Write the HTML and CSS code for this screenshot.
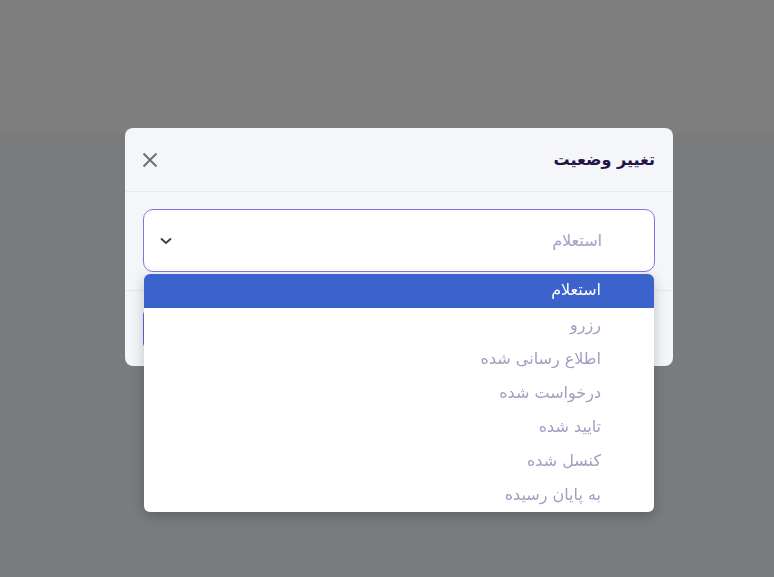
FILE: index.html
```html
<!DOCTYPE html>
<html lang="fa">
<head>
<meta charset="utf-8">
<link rel="stylesheet" href="styles.css">
</head>
<body>
<div class="page">
  <div class="topbar"></div>
  <div class="content"></div>
</div>
<div class="overlay">
  <div class="modal" dir="rtl">
    <div class="modal-header">
      <h2 class="title">تغییر وضعیت</h2>
      <button class="close" aria-label="close">
        <svg width="16" height="16" viewBox="0 0 16 16"><path d="M1.5 1.5 L14.5 14.5 M14.5 1.5 L1.5 14.5" stroke="#707070" stroke-width="2" fill="none"/></svg>
      </button>
    </div>
    <div class="modal-body">
      <div class="select">
        <span class="placeholder">استعلام</span>
        <svg class="chev" width="12" height="8" viewBox="0 0 12 8"><path d="M1 1.5 L6 6 L11 1.5" stroke="#3c3c44" stroke-width="1.8" fill="none"/></svg>
      </div>
      <ul class="menu">
        <li class="item active">استعلام</li>
        <li class="item">رزرو</li>
        <li class="item">اطلاع رسانی شده</li>
        <li class="item">درخواست شده</li>
        <li class="item">تایید شده</li>
        <li class="item">کنسل شده</li>
        <li class="item">به پایان رسیده</li>
      </ul>
    </div>
    <div class="modal-footer">
      <button class="btn">ثبت</button>
    </div>
  </div>
</div>
</body>
</html>
```
FILE: styles.css
```css
html, body {
  margin: 0;
  padding: 0;
  height: 100%;
}
body {
  font-family: "DejaVu Sans", "Noto Sans", sans-serif;
  background: #f4f6fa;
}
.page {
  height: 100%;
}
.topbar {
  height: 132px;
  background: #ffffff;
}
.overlay {
  position: fixed;
  inset: 0;
  background: rgba(0, 0, 0, 0.5);
}
.modal {
  position: relative;
  margin: 128px 0 0 125px;
  width: 548px;
  background: #f5f6fa;
  border-radius: 8px;
}
.modal-header {
  height: 63px;
  display: flex;
  align-items: center;
  justify-content: space-between;
  padding: 0 18px 0 14px;
  border-bottom: 1px solid #e8e9ef;
}
.title {
  margin: 0;
  font-size: 16px;
  font-weight: bold;
  color: #1f1546;
}
.close {
  border: 0;
  background: none;
  padding: 0;
  width: 16px;
  height: 16px;
  display: flex;
  margin-left: 3px;
}
.modal-body {
  position: relative;
  padding: 17px 18px 18px 18px;
}
.select {
  height: 61px;
  border: 1px solid #7c78e2;
  border-radius: 10px;
  background: #ffffff;
  display: flex;
  align-items: center;
  justify-content: space-between;
  padding: 0 52px 0 16px;
}
.placeholder {
  font-size: 16px;
  color: #a6a2c4;
}
.chev {
  display: block;
}
.menu {
  position: absolute;
  top: 82px;
  left: 19px;
  right: 19px;
  margin: 0;
  padding: 0;
  list-style: none;
  background: #ffffff;
  border-radius: 6px;
  box-shadow: 0 4px 14px rgba(0, 0, 0, 0.22);
  overflow: hidden;
  z-index: 2;
}
.item {
  height: 34px;
  line-height: 34px;
  padding: 0 53px 0 12px;
  font-size: 16px;
  color: #a29ec2;
}
.item.active {
  background: #3c62cb;
  color: #ffffff;
  line-height: 32px;
}
.modal-footer {
  height: 75px;
  border-top: 1px solid #e8e9ef;
  display: flex;
  align-items: center;
  justify-content: flex-end;
  padding: 0 18px;
}
.btn {
  height: 40px;
  width: 90px;
  border: 0;
  border-radius: 6px;
  background: #6c63d9;
  color: #fff;
  font-family: inherit;
}
```
